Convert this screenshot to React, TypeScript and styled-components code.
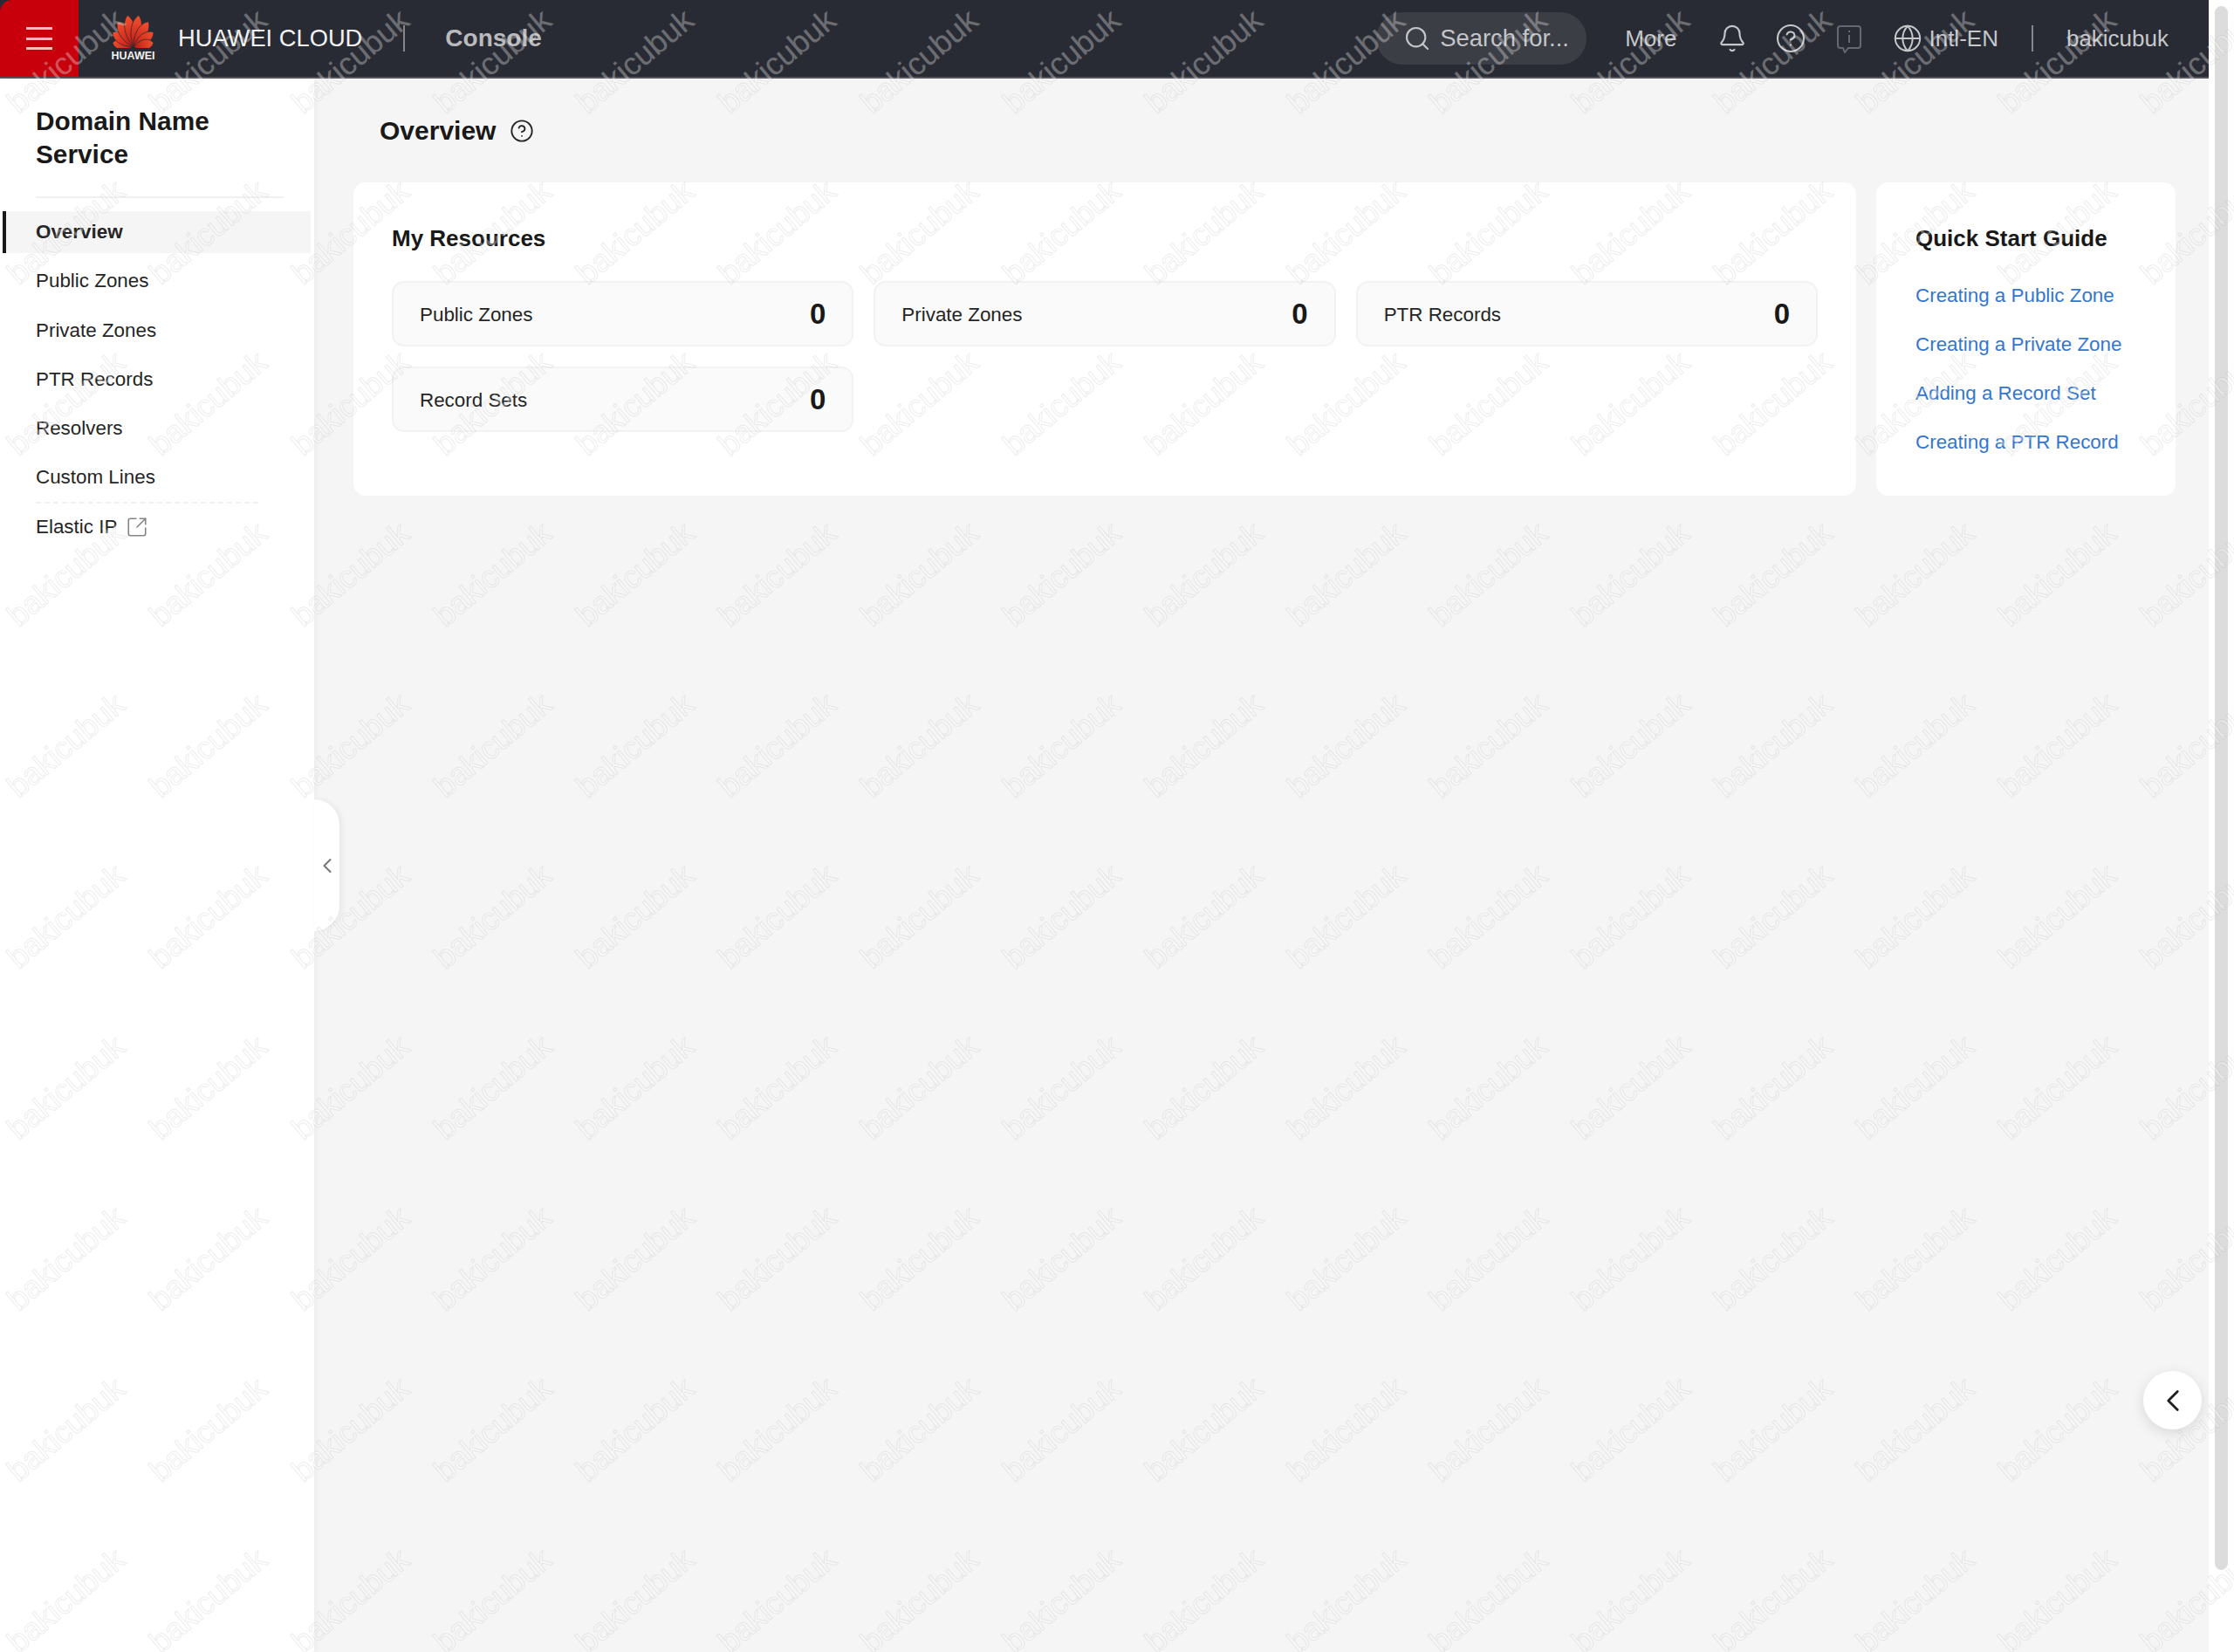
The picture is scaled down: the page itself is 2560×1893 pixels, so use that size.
import styled, { createGlobalStyle } from "styled-components";
import { Bell, ChevronLeft, CircleHelp, Globe, Search, SquareArrowOutUpRight } from "lucide-react";

const NAV_ITEMS = ["Overview", "Public Zones", "Private Zones", "PTR Records", "Resolvers", "Custom Lines"];
const RESOURCES = [
    { label: "Public Zones", count: 0 },
    { label: "Private Zones", count: 0 },
    { label: "PTR Records", count: 0 },
    { label: "Record Sets", count: 0 },
];
const GUIDES = ["Creating a Public Zone", "Creating a Private Zone", "Adding a Record Set", "Creating a PTR Record"];
const PETALS = [
    { angle: -78, len: 24 },
    { angle: -54, len: 29 },
    { angle: -31, len: 34 },
    { angle: -10, len: 37 },
    { angle: 10, len: 37 },
    { angle: 31, len: 34 },
    { angle: 54, len: 29 },
    { angle: 78, len: 24 },
];

const HuaweiPetals = () => (
    <svg width="49" height="38" viewBox="0 0 49 38">
        <defs>
            <linearGradient id="petal" x1="0" y1="0" x2="0" y2="1">
                <stop offset="0" stopColor="#f4512f" />
                <stop offset="1" stopColor="#bd1a12" />
            </linearGradient>
        </defs>
        {PETALS.map(({ angle, len }) => (
            <path
                key={angle}
                transform={`translate(24.5 37) rotate(${angle})`}
                d={`M0 -1 C-8 ${-len * 0.4} -7.5 ${-len * 0.82} 0 ${-len} C7.5 ${-len * 0.82} 8 ${-len * 0.4} 0 -1Z`}
                fill="url(#petal)"
                stroke="#282b33"
                strokeWidth="0.7"
            />
        ))}
    </svg>
);

const FeedbackIcon = () => (
    <svg width="32" height="33" viewBox="0 0 32 33" fill="none" stroke="#66686f" strokeWidth="2">
        <path d="M6 2h20a3 3 0 0 1 3 3v19a3 3 0 0 1-3 3H15l-4 5-2-5H6a3 3 0 0 1-3-3V5a3 3 0 0 1 3-3Z" />
        <path d="M16 12v9M16 7v2" />
    </svg>
);

export default function App() {
    return (
        <>
            <GlobalStyle />
            <Page>
                <Viewport>
                    <Header>
                        <MenuBlock>
                            <MenuLine />
                            <MenuLine />
                            <MenuLine />
                        </MenuBlock>
                        <Logo>
                            <HuaweiPetals />
                            <LogoText>HUAWEI</LogoText>
                        </Logo>
                        <Brand>HUAWEI CLOUD</Brand>
                        <HeaderDivider $left={47} />
                        <Console>Console</Console>
                        <HeaderRight>
                            <SearchPill>
                                <Search size={32} strokeWidth={1.6} />
                                <span>Search for...</span>
                            </SearchPill>
                            <HeaderText $left={44}>More</HeaderText>
                            <HeaderIcon $left={47}>
                                <Bell size={34} strokeWidth={1.5} />
                            </HeaderIcon>
                            <HeaderIcon $left={32}>
                                <CircleHelp size={36} strokeWidth={1.4} />
                            </HeaderIcon>
                            <HeaderIcon $left={33}>
                                <FeedbackIcon />
                            </HeaderIcon>
                            <HeaderIcon $left={34}>
                                <Globe size={34} strokeWidth={1.4} />
                            </HeaderIcon>
                            <HeaderText $left={7}>Intl-EN</HeaderText>
                            <HeaderDivider $left={38} />
                            <HeaderText $left={38}>bakicubuk</HeaderText>
                        </HeaderRight>
                    </Header>
                    <Body>
                        <Sidebar>
                            <ServiceTitle>Domain Name Service</ServiceTitle>
                            <SideDivider />
                            <NavList>
                                {NAV_ITEMS.map((item, i) => (
                                    <NavItem key={item} $active={i === 0}>
                                        {item}
                                    </NavItem>
                                ))}
                                <NavDashed />
                                <NavItem>
                                    Elastic IP
                                    <SquareArrowOutUpRight size={26} strokeWidth={1.5} color="#858585" />
                                </NavItem>
                            </NavList>
                            <CollapseTab>
                                <ChevronLeft size={28} strokeWidth={1.8} color="#777" />
                            </CollapseTab>
                        </Sidebar>
                        <Main>
                            <TitleRow>
                                <PageTitle>Overview</PageTitle>
                                <CircleHelp size={28} strokeWidth={1.6} color="#252525" />
                            </TitleRow>
                            <CardRow>
                                <ResourcesCard>
                                    <CardTitle>My Resources</CardTitle>
                                    <TileGrid>
                                        {RESOURCES.map(r => (
                                            <Tile key={r.label}>
                                                <TileLabel>{r.label}</TileLabel>
                                                <TileCount>{r.count}</TileCount>
                                            </Tile>
                                        ))}
                                    </TileGrid>
                                </ResourcesCard>
                                <GuideCard>
                                    <CardTitle>Quick Start Guide</CardTitle>
                                    <GuideList>
                                        {GUIDES.map(g => (
                                            <GuideLink key={g}>{g}</GuideLink>
                                        ))}
                                    </GuideList>
                                </GuideCard>
                            </CardRow>
                        </Main>
                    </Body>
                    <FloatButton>
                        <ChevronLeft size={42} strokeWidth={1.6} color="#1f1f1f" />
                    </FloatButton>
                </Viewport>
                <ScrollGutter>
                    <ScrollThumb />
                </ScrollGutter>
                <Watermarks>
                    <WatermarkGrid>
                        {Array.from({ length: 160 }, (_, i) => (
                            <WatermarkCell key={i}>
                                <WatermarkText>bakicubuk</WatermarkText>
                            </WatermarkCell>
                        ))}
                    </WatermarkGrid>
                </Watermarks>
            </Page>
        </>
    );
}

const GlobalStyle = createGlobalStyle`
    html, body {
        margin: 0;
        padding: 0;
        background: #fff;
    }
    body {
        font-family: "Liberation Sans", Arial, sans-serif;
        color: #191919;
    }
`;

const Page = styled.div`
    position: relative;
    display: flex;
    width: 2560px;
    height: 1893px;
    overflow: hidden;
    background: #fff;
`;

const Viewport = styled.div`
    position: relative;
    display: flex;
    flex-direction: column;
    width: 2531px;
    height: 100%;
`;

const ScrollGutter = styled.div`
    flex: 1;
    display: flex;
    padding: 7px 7px 94px 7px;
    background: #fff;
`;

const ScrollThumb = styled.div`
    flex: 1;
    border-radius: 8px;
    background: #dcdcdc;
`;

const Header = styled.header`
    display: flex;
    align-items: center;
    flex: 0 0 90px;
    box-sizing: border-box;
    border-bottom: 2px solid #54555b;
    background: #282b33;
`;

const MenuBlock = styled.div`
    display: flex;
    flex-direction: column;
    justify-content: center;
    gap: 8.5px;
    align-self: stretch;
    width: 90px;
    padding: 0 30px;
    box-sizing: border-box;
    border-top-left-radius: 14px;
    background: #c7000b;
`;

const MenuLine = styled.div`
    height: 3px;
    background: #f9c0c0;
`;

const Logo = styled.div`
    display: flex;
    flex-direction: column;
    align-items: center;
    gap: 3px;
    width: 49px;
    margin-left: 38px;
`;

const LogoText = styled.div`
    color: #f2f2f2;
    font-size: 12.5px;
    font-weight: 700;
    line-height: 13px;
`;

const Brand = styled.div`
    margin-left: 27px;
    color: #f2f2f2;
    font-size: 27.3px;
    white-space: nowrap;
`;

const HeaderDivider = styled.div<{ $left: number }>`
    width: 2px;
    height: 30px;
    margin-left: ${p => p.$left}px;
    background: #85868b;
`;

const Console = styled.div`
    margin-left: 46px;
    color: #b9babe;
    font-size: 28px;
    font-weight: 700;
`;

const HeaderRight = styled.div`
    display: flex;
    align-items: center;
    margin-left: auto;
    padding-right: 46px;
`;

const SearchPill = styled.div`
    display: flex;
    align-items: center;
    gap: 10px;
    width: 241px;
    height: 60px;
    padding-left: 31px;
    box-sizing: border-box;
    border-radius: 30px;
    background: #3c3e46;
    color: #c4c5c9;
    font-size: 27.4px;
    white-space: nowrap;
`;

const HeaderText = styled.div<{ $left: number }>`
    margin-left: ${p => p.$left}px;
    color: #c6c7cb;
    font-size: 26px;
    white-space: nowrap;
`;

const HeaderIcon = styled.div<{ $left: number }>`
    display: flex;
    margin-left: ${p => p.$left}px;
    color: #c6c7cb;
`;

const Body = styled.div`
    flex: 1;
    display: flex;
    min-height: 0;
    background: #f5f5f5;
`;

const Sidebar = styled.aside`
    position: relative;
    flex: 0 0 360px;
    box-sizing: border-box;
    padding-top: 30px;
    background: #fff;
    box-shadow: 2px 0 6px rgba(0, 0, 0, 0.04);
`;

const ServiceTitle = styled.h2`
    width: 284px;
    margin: 0 0 0 41px;
    color: #191919;
    font-size: 29.8px;
    font-weight: 700;
    line-height: 37.5px;
`;

const SideDivider = styled.div`
    width: 284px;
    height: 2px;
    margin: 30px 0 15px 41px;
    background: #f0f0f0;
`;

const NavList = styled.nav`
    display: flex;
    flex-direction: column;
    gap: 8.3px;
`;

const NavItem = styled.div<{ $active?: boolean }>`
    display: flex;
    align-items: center;
    gap: 10px;
    width: 353px;
    height: 48px;
    margin-left: 3px;
    padding-left: 34px;
    box-sizing: border-box;
    border-left: 4px solid ${p => (p.$active ? "#191919" : "transparent")};
    background: ${p => (p.$active ? "#f5f5f5" : "transparent")};
    color: #252525;
    font-size: 22.4px;
    font-weight: ${p => (p.$active ? 700 : 400)};
`;

const NavDashed = styled.div`
    width: 255px;
    margin: -5px 0 -5px 41px;
    border-top: 2px dashed #f0f0f0;
`;

const CollapseTab = styled.div`
    position: absolute;
    top: 826px;
    left: 100%;
    display: flex;
    align-items: center;
    justify-content: flex-end;
    width: 29px;
    height: 151px;
    border-radius: 0 30px 30px 0;
    background: #fff;
    box-shadow: 3px 0 6px rgba(0, 0, 0, 0.06);
`;

const Main = styled.main`
    flex: 1;
    min-width: 0;
    padding: 0 38px 0 45px;
`;

const TitleRow = styled.div`
    display: flex;
    align-items: center;
    gap: 16px;
    height: 119px;
    padding: 0 0 0 30px;
    box-sizing: border-box;
`;

const PageTitle = styled.h1`
    margin: 0;
    color: #191919;
    font-size: 30px;
    font-weight: 700;
`;

const CardRow = styled.div`
    display: flex;
    gap: 23px;
    height: 359px;
`;

const ResourcesCard = styled.section`
    flex: 1;
    padding: 46px 44px 0;
    border-radius: 14px;
    background: #fff;
`;

const GuideCard = styled.section`
    flex: 0 0 343px;
    box-sizing: border-box;
    padding: 46px 0 0 45px;
    border-radius: 14px;
    background: #fff;
`;

const CardTitle = styled.h3`
    margin: 0;
    color: #191919;
    font-size: 26px;
    font-weight: 700;
    line-height: 36px;
`;

const TileGrid = styled.div`
    display: grid;
    grid-template-columns: repeat(3, 1fr);
    gap: 23px;
    margin-top: 31px;
`;

const Tile = styled.div`
    display: flex;
    align-items: center;
    justify-content: space-between;
    height: 75px;
    padding: 0 30px;
    box-sizing: border-box;
    border: 2px solid #f2f2f2;
    border-radius: 14px;
    background: #fafafa;
    color: #252525;
    font-size: 22.4px;
`;

const TileLabel = styled.span`
    padding-top: 3px;
`;

const TileCount = styled.span`
    color: #191919;
    font-size: 33px;
    font-weight: 700;
`;

const GuideList = styled.div`
    display: flex;
    flex-direction: column;
    margin-top: 20px;
`;

const GuideLink = styled.a`
    color: #3376cf;
    font-size: 22.4px;
    line-height: 56px;
    white-space: nowrap;
`;

const FloatButton = styled.div`
    position: absolute;
    right: 8px;
    bottom: 255px;
    display: flex;
    align-items: center;
    justify-content: center;
    width: 67px;
    height: 67px;
    border-radius: 50%;
    background: #fff;
    box-shadow: 0 4px 16px rgba(0, 0, 0, 0.12);
`;

const Watermarks = styled.div`
    position: absolute;
    inset: 0;
    overflow: hidden;
    pointer-events: none;
`;

const WatermarkGrid = styled.div`
    display: grid;
    grid-template-columns: repeat(16, 163px);
    grid-auto-rows: 196px;
    margin-top: -60px;
`;

const WatermarkCell = styled.div`
    display: flex;
    align-items: flex-end;
    padding-left: 25px;
`;

const WatermarkText = styled.span`
    display: block;
    color: rgba(255, 255, 255, 0.32);
    font-size: 36px;
    line-height: 36px;
    white-space: nowrap;
    -webkit-text-stroke: 1.2px rgba(130, 130, 130, 0.14);
    transform: rotate(-40deg);
    transform-origin: left bottom;
`;
